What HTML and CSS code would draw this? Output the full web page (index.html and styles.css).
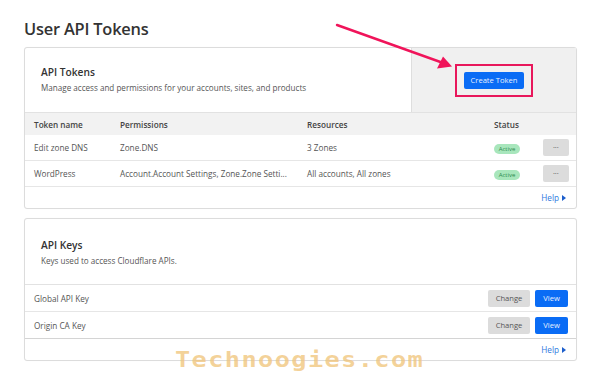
FILE: index.html
```html
<!DOCTYPE html>
<html>
<head>
<meta charset="utf-8">
<link rel="stylesheet" href="styles.css">
</head>
<body>
<h1 class="title">User API Tokens</h1>

<section class="card">
  <div class="card-head">
    <div class="head-text">
      <h2 class="head-title">API Tokens</h2>
      <p class="head-desc">Manage access and permissions for your accounts, sites, and products</p>
    </div>
    <div class="head-action">
      <div class="highlight"><button class="btn btn-primary btn-create">Create Token</button></div>
    </div>
  </div>
  <div class="trow thead">
    <div>Token name</div><div>Permissions</div><div>Resources</div><div>Status</div><div></div>
  </div>
  <div class="trow">
    <div>Edit zone DNS</div><div>Zone.DNS</div><div>3 Zones</div><div><span class="badge">Active</span></div><div class="act"><button class="btn btn-more">&bull;&bull;&bull;</button></div>
  </div>
  <div class="trow">
    <div>WordPress</div><div>Account.Account Settings, Zone.Zone Setti...</div><div>All accounts, All zones</div><div><span class="badge">Active</span></div><div class="act"><button class="btn btn-more">&bull;&bull;&bull;</button></div>
  </div>
  <div class="card-foot"><a class="help">Help <span class="tri"></span></a></div>
</section>

<section class="card">
  <div class="card-head keys-head">
    <div class="head-text">
      <h2 class="head-title">API Keys</h2>
      <p class="head-desc">Keys used to access Cloudflare APIs.</p>
    </div>
  </div>
  <div class="krow">
    <div>Global API Key</div>
    <div class="kbtns"><button class="btn btn-gray">Change</button><button class="btn btn-primary btn-view">View</button></div>
  </div>
  <div class="krow last">
    <div>Origin CA Key</div>
    <div class="kbtns"><button class="btn btn-gray">Change</button><button class="btn btn-primary btn-view">View</button></div>
  </div>
  <div class="card-foot"><a class="help">Help <span class="tri"></span></a></div>
</section>

<svg class="arrow" width="600" height="100" viewBox="0 0 600 100">
  <line x1="337" y1="25" x2="446" y2="64" stroke="#f0145a" stroke-width="2.4" stroke-linecap="round"/>
  <polygon points="452,66.5 437,68.5 443,56.5" fill="#f0145a"/>
</svg>

<div class="watermark">Technoogies.com</div>
</body>
</html>
```

FILE: styles.css
```css
* { box-sizing: border-box; }
html, body { margin: 0; padding: 0; }
body {
  width: 600px;
  height: 384px;
  background: #fff;
  font-family: "Open Sans", "Noto Sans", sans-serif;
  color: #555;
  padding: 17px 23px 0 24px;
  position: relative;
  overflow: hidden;
}
.title {
  margin: 0 0 6px 0;
  font-size: 16.4px;
  font-weight: 600;
  color: #333;
  line-height: 24px;
  letter-spacing: -0.2px;
}
.card {
  border: 1px solid #dcdcdc;
  border-radius: 3px;
  margin-bottom: 9px;
  background: #fff;
  box-shadow: 0 0 1px rgba(0,0,0,0.05);
}
.card-head {
  display: flex;
  height: 65px;
  border-bottom: 1px solid #e2e2e2;
}
.head-text {
  flex: 1;
  padding: 17px 0 0 16px;
}
.keys-head .head-text { padding-top: 19px; }
.keys-head { height: 66px; }
.head-title {
  margin: 0;
  font-size: 10.2px;
  font-weight: 600;
  color: #333;
  line-height: 14px;
}
.head-desc {
  margin: 3px 0 0 0;
  font-size: 8.1px;
  line-height: 11px;
  color: #555;
}
.head-action {
  width: 165px;
  background: #f0f0f0;
  border-left: 1px solid #dedede;
  display: flex;
  align-items: center;
  justify-content: center;
}
.highlight {
  border: 2px solid #e8175b;
  padding: 6px 7px;
  display: flex;
}
.btn {
  font-family: "Open Sans", "Noto Sans", sans-serif;
  border: none;
  border-radius: 2px;
  padding: 0;
  font-size: 7.6px;
  line-height: 17px;
  height: 17px;
  cursor: pointer;
}
.btn-primary { background: #0a6cf5; color: #e8f0ff; }
.btn-create { width: 60px; }
.trow {
  display: grid;
  grid-template-columns: 86px 187px 187px 49px 1fr;
  align-items: center;
  height: 26px;
  padding: 0 8px 0 9px;
  border-bottom: 1px solid #e6e6e6;
  font-size: 8.2px;
  color: #555;
  white-space: nowrap;
}
.trow.thead {
  height: 22px;
  background: #f2f2f2;
  font-weight: 600;
  color: #444;
  border-bottom: none;
}
.act { display: flex; justify-content: flex-end; }
.badge {
  display: inline-block;
  width: 26px;
  height: 10px;
  line-height: 10px;
  text-align: center;
  border-radius: 5px;
  background: #a8e6bc;
  color: #2e8a4c;
  font-size: 6px;
}
.btn-more {
  width: 26px;
  height: 17px;
  background: #dcdcdc;
  color: #666;
  font-size: 4px;
  line-height: 17px;
  letter-spacing: 0.3px;
}
.card-foot {
  height: 21px;
  display: flex;
  justify-content: flex-end;
  align-items: center;
  padding-right: 10px;
}
.help {
  color: #2f78e0;
  font-size: 8.2px;
  display: flex;
  align-items: center;
  gap: 3px;
}
.tri {
  width: 0; height: 0;
  border-top: 3.5px solid transparent;
  border-bottom: 3.5px solid transparent;
  border-left: 4px solid #1d5fcc;
}
.krow {
  display: flex;
  justify-content: space-between;
  align-items: center;
  height: 27px;
  padding: 0 8px 0 9px;
  border-bottom: 1px solid #e6e6e6;
  font-size: 8.2px;
  color: #555;
}
.krow.last { border-bottom: 1px solid #d4d4d4; }
.kbtns { display: flex; gap: 5px; }
.btn-gray { width: 42px; background: #dcdcdc; color: #555; }
.btn-view { width: 33px; }
.arrow {
  position: absolute;
  left: 0;
  top: 0;
  pointer-events: none;
}
.watermark {
  position: absolute;
  left: 175px;
  top: 345px;
  font-family: "DejaVu Sans Mono", monospace;
  font-weight: bold;
  font-size: 22px;
  letter-spacing: 1.2px;
  transform: scaleX(1.15);
  transform-origin: left center;
  color: rgba(240, 195, 120, 0.75);
  line-height: 30px;
  white-space: nowrap;
}
```
